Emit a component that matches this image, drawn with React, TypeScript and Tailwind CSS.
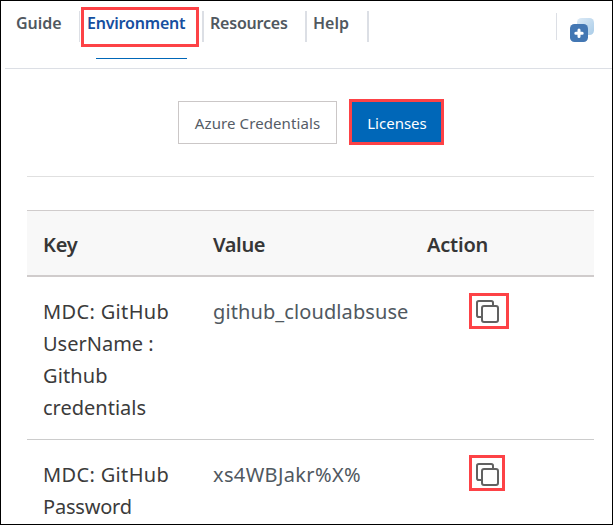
function CopyIcon() {
  return (
    <svg width="23" height="23" viewBox="0 0 23 23" fill="none" stroke="#616161" strokeWidth="2">
      <path d="M5.500 17H2.800Q1 17 1 15.200V2.800Q1 1 2.800 1H15.200Q17 1 17 2.800V5.500" />
      <rect x="6" y="6" width="16" height="16" rx="2" fill="white" />
    </svg>
  );
}

function AddIcon() {
  return (
    <svg width="26" height="26" viewBox="0 0 26 26">
      <defs>
        <linearGradient id="back" x1="0" y1="0" x2="1" y2="1">
          <stop offset="0" stopColor="#dceaf6" />
          <stop offset="1" stopColor="#a9cce8" />
        </linearGradient>
      </defs>
      <rect x="7" y="1" width="17" height="17" rx="4.500" fill="url(#back)" />
      <rect x="0" y="7" width="18" height="18" rx="4.500" fill="#4377b3" />
      <path d="M9 13v6.400M5.800 16.200h6.400" stroke="white" strokeWidth="3" strokeLinecap="round" />
    </svg>
  );
}

export default function App() {
  return (
    <div className="flex h-[525px] w-[613px] flex-col overflow-hidden border border-black bg-white font-['Noto_Sans','Open_Sans',sans-serif]">
      <header className="ml-1 flex h-[68px] w-[607px] shrink-0 border-b border-[#dcdfe5] text-base leading-6 font-semibold text-[#505860]">
        <div className="mt-[10px] h-[31px] w-[75px] border-r border-[#dcdfe5] pl-[11px]">
          <span className="block">Guide</span>
        </div>
        <div className="relative w-[122px]">
          <div className="absolute top-[6px] left-[1px] h-10 w-[118px] border-3 border-[#fd4246]" />
          <span className="mt-[10px] block pl-[7px] tracking-[-0.2px] text-[#164f9f]">Environment</span>
          <div className="mt-[23px] ml-4 h-px w-[91px] bg-[#0067b8]" />
        </div>
        <div className="mt-[10px] h-[31px] w-[105px] border-x-2 border-[#dcdfe5] pl-[6px]">
          <span className="block tracking-[-0.2px]">Resources</span>
        </div>
        <div className="mt-[10px] h-[31px] w-[62px] border-r-2 border-[#dcdfe5] pl-[6px]">
          <span className="block">Help</span>
        </div>
        <div className="mt-[12px] ml-auto h-[27px] w-[56px] border-l border-[#dcdfe5] pt-1 pl-[13px]">
          <AddIcon />
        </div>
      </header>

      <main className="mr-[18px] ml-[26px] flex flex-col">
        <div className="flex h-[108px] items-start border-b border-[#e0e0e0] pt-[30px] pl-[151px] text-[15px]">
          <button className="mt-[2px] h-[43px] w-[159px] border border-[#cbc7c7] pt-px tracking-[0.1px] text-[#555c66]">Azure Credentials</button>
          <button className="ml-3 h-[46px] w-[95px] border-3 border-[#fd4246] bg-[#0067b8] pt-[3px] pl-px text-white">Licenses</button>
        </div>

        <table className="mt-[33px] w-[567px] table-fixed border-collapse text-left align-top text-[20px] leading-[32.3px]">
          <colgroup>
            <col className="w-[170px]" />
            <col className="w-[214px]" />
            <col className="w-[183px]" />
          </colgroup>
          <thead>
            <tr className="h-[65px] border-t border-b-2 border-t-[#d0cccc] border-b-[#d0cccc] bg-[#f8f8f8] text-[#363636]">
              <th className="pt-1 pb-0 pl-4 font-semibold tracking-[-0.2px]">Key</th>
              <th className="pt-1 pl-4 font-semibold tracking-[-0.400px]">Value</th>
              <th className="pt-1 pl-4 font-semibold tracking-[-0.2px]">Action</th>
            </tr>
          </thead>
          <tbody>
            <tr className="h-[164px] border-b border-[#ccc] align-top">
              <td className="pt-[19px] pl-4 text-[#3b3b3b]">
                <span className="tracking-[0.35px]">MDC: GitHub</span>
                <br />
                <span>UserName :</span>
                <br />
                <span className="tracking-[0.1px]">Github</span>
                <br />
                <span>credentials</span>
              </td>
              <td className="pt-[19px] pl-4 tracking-[0.1px] text-[#505860]">github_cloudlabsuse</td>
              <td className="pt-4 pl-[58px]">
                <div className="flex h-9 w-10 border-3 border-[#fd4246] pt-1 pl-1">
                  <CopyIcon />
                </div>
              </td>
            </tr>
            <tr className="align-top">
              <td className="pt-[19px] pl-4 text-[#3b3b3b]">
                <span className="tracking-[0.35px]">MDC: GitHub</span>
                <br />
                <span className="tracking-[-0.200px]">Password</span>
              </td>
              <td className="pt-[19px] pl-4 tracking-[0.35px] text-[#505860]">xs4WBJakr%X%</td>
              <td className="pt-[15px] pl-[58px]">
                <div className="flex size-9 border-3 border-[#fd4246] pt-[5px] pl-1">
                  <CopyIcon />
                </div>
              </td>
            </tr>
          </tbody>
        </table>
      </main>
    </div>
  );
}
